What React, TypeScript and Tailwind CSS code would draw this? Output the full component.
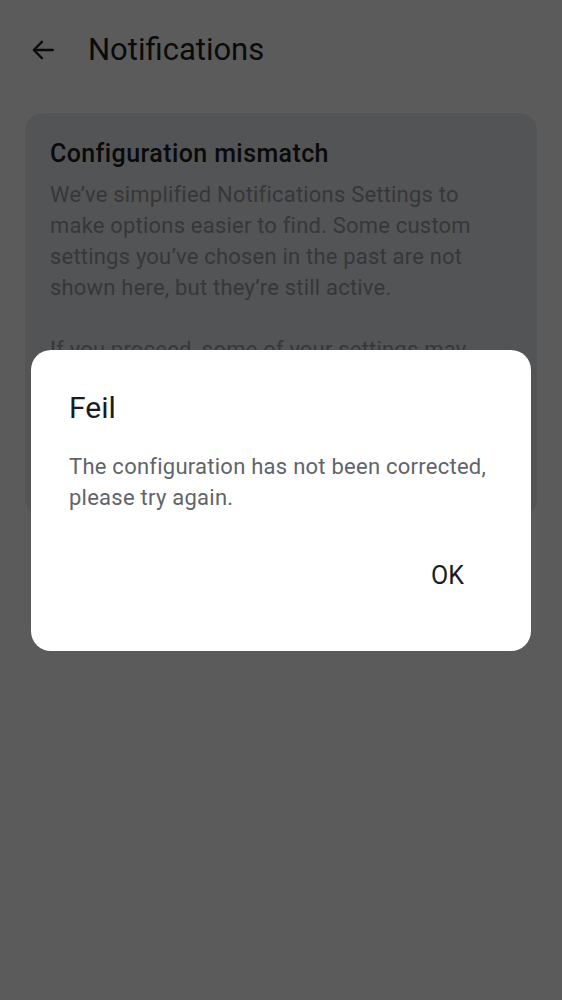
import React from 'react';

export default function App() {
  return (
    <div className="relative h-[1000px] w-[562px] overflow-hidden bg-white font-['Roboto',sans-serif]">
      {/* page behind the dialog */}
      <div className="flex h-[100px] items-center">
        <div className="ml-[30px] flex h-[26px] w-[26px] items-center justify-center">
          <svg width="26" height="26" viewBox="0 0 24 24" fill="none" stroke="#1c1c1c" strokeWidth="2.2" strokeLinecap="round" strokeLinejoin="round">
            <path d="M21 12H4" />
            <path d="M11 4.5L3.5 12L11 19.5" />
          </svg>
        </div>
        <h1 className="ml-[32px] text-[31px] leading-[36px] text-[#1c1c1c]">Notifications</h1>
      </div>

      <div className="mx-[25px] mt-[13px] min-h-[404px] rounded-[18px] bg-[#e8ebf0] px-[25px] pb-[26px] pt-[26px]">
        <h2 className="text-[25px] font-medium leading-[30px] tracking-[0.4px] text-[#1c1c1c]">Configuration mismatch</h2>
        <p className="mt-[10px] text-[22px] leading-[31px] tracking-[0.2px] text-[#9a9b9d]">
          We’ve simplified Notifications Settings to make options easier to find. Some custom settings you’ve chosen in the past are not shown here, but they’re still active.
        </p>
        <p className="mt-[31px] text-[22px] leading-[31px] tracking-[0.2px] text-[#9a9b9d]">
          If you proceed, some of your settings may change to match the new options. You can review them here at any time.
        </p>
      </div>

      {/* dim overlay + dialog */}
      <div className="absolute inset-0 flex items-center justify-center bg-black/[0.643]">
        <div className="w-[500px] rounded-[20px] bg-white pb-[60px] pl-[38px] pr-[38px] pt-[40px]">
          <h3 className="text-[30px] leading-[36px] text-[#1b1b1f]">Feil</h3>
          <p className="mt-[25px] text-[22px] leading-[31px] tracking-[0.25px] text-[#61646a]">
            The configuration has not been corrected, please try again.
          </p>
          <div className="mt-[48px] flex justify-end pr-[29px]">
            <button className="text-[25px] leading-[30px] text-[#1b1b1f]">OK</button>
          </div>
        </div>
      </div>
    </div>
  );
}
